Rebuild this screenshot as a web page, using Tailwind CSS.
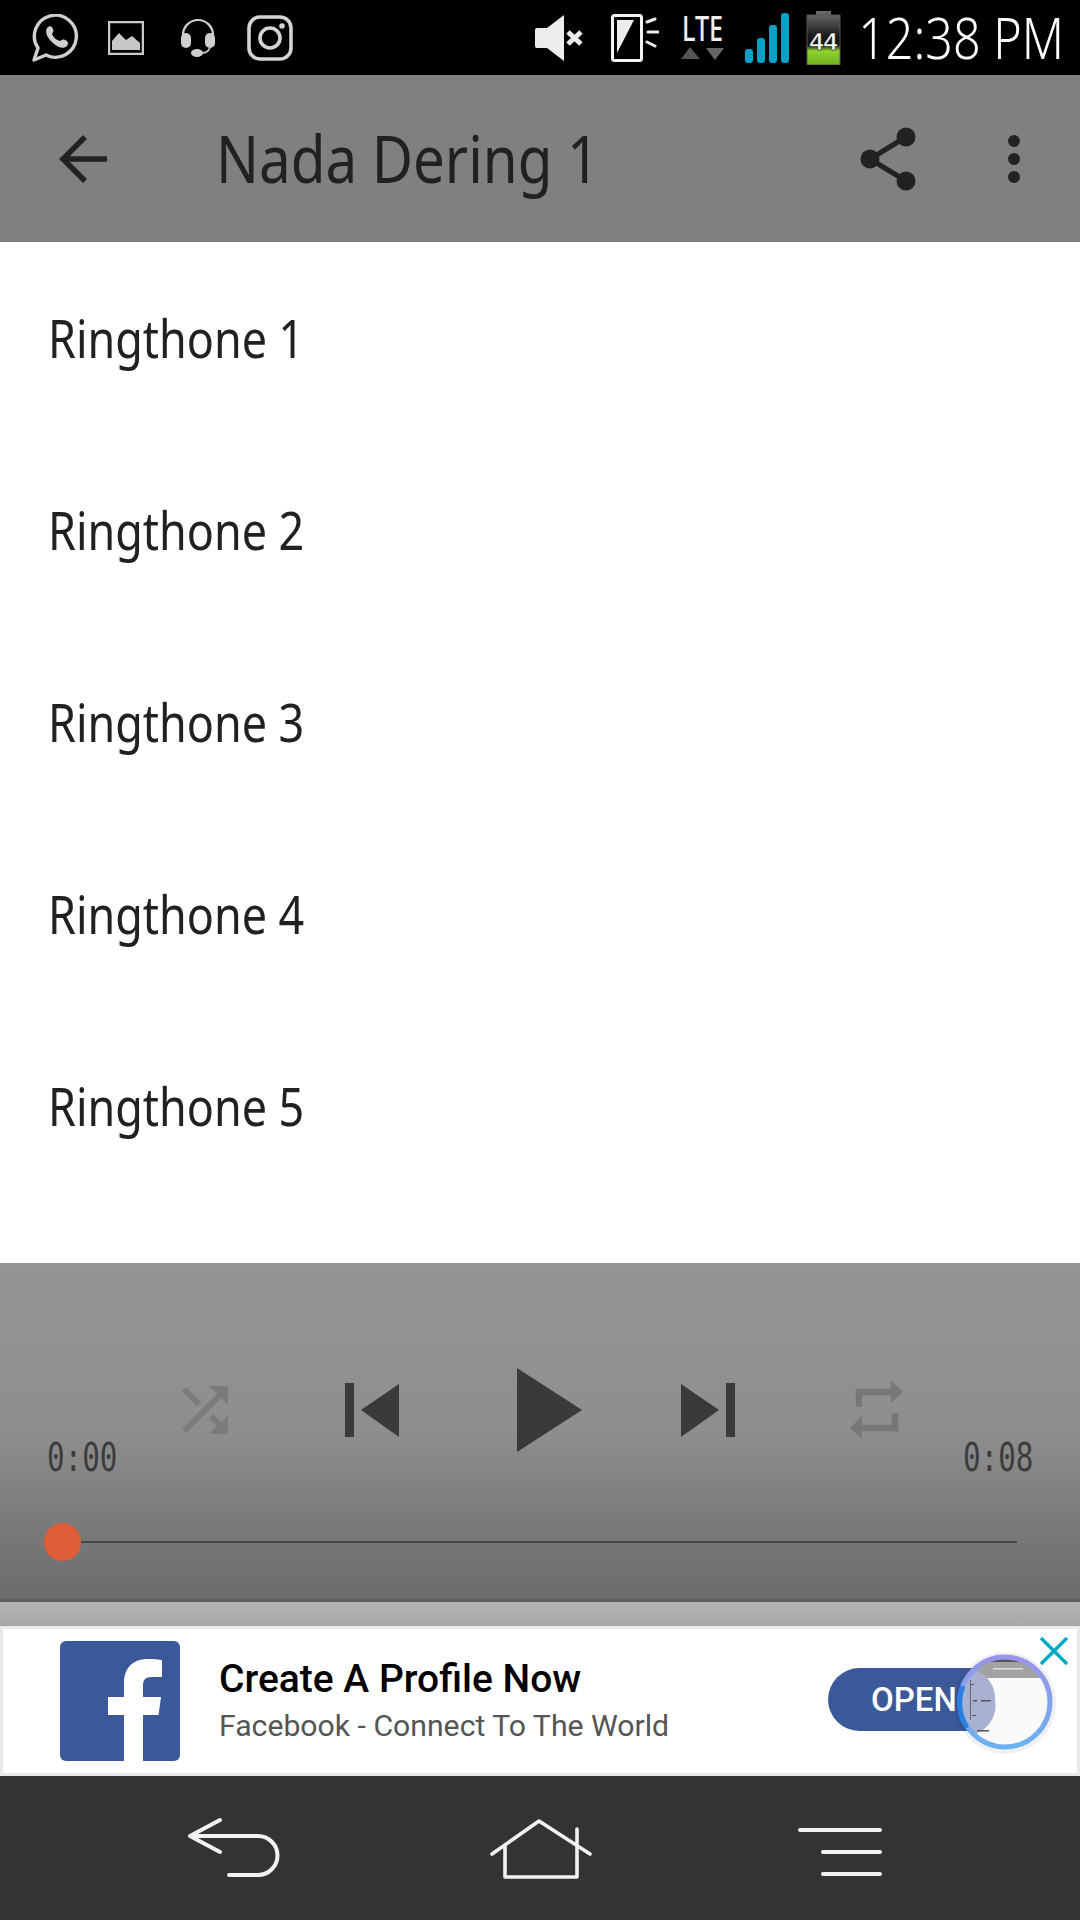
<!DOCTYPE html>
<html>
<head>
<meta charset="utf-8">
<script src="https://cdn.jsdelivr.net/npm/@tailwindcss/browser@4"></script>
</head>
<body class="m-0">
<div class="w-[1080px] h-[1920px] flex flex-col overflow-hidden bg-white font-['Noto_Sans',sans-serif]">

  <!-- status bar -->
  <div class="h-[75px] shrink-0 bg-black flex items-center relative">
    <svg class="shrink-0 ml-[31px] w-[48px] h-[48px]" viewBox="0 0 48 48" fill="none" stroke="#cfcfcf">
      <path d="M3 46 L7 34 A21 21 0 1 1 15 41 Z" stroke-width="3.4" stroke-linejoin="round"/>
      <path d="M16 14 c3 -3 5 -2 6 1 c1 2 0 3 -1 5 c2 4 4 6 8 7 c2 -1 3 -2 5 -1 c3 1 4 3 2 6 c-3 3 -8 2 -13 -2 c-5 -4 -10 -11 -7 -16 Z" fill="#cfcfcf" stroke="none"/>
    </svg>
    <svg class="shrink-0 ml-[29px] w-[36px] h-[34px]" viewBox="0 0 36 34">
      <rect x="1" y="1" width="34" height="32" fill="none" stroke="#c8c8c8" stroke-width="2.5"/>
      <path d="M4 29 V20 L11 12 L18 19 L24 15 L32 22 V29 Z" fill="#c8c8c8"/>
    </svg>
    <svg class="shrink-0 ml-[36px] w-[36px] h-[39px]" viewBox="0 0 36 39" fill="none">
      <path d="M3 20 V17 A15 15 0 0 1 33 17 V20" stroke="#cfcfcf" stroke-width="2.2"/>
      <rect x="1" y="15" width="10" height="15" rx="5" fill="#cfcfcf"/>
      <rect x="25" y="15" width="10" height="15" rx="5" fill="#cfcfcf"/>
      <path d="M30 29 C29 33 26 35 22 35" stroke="#cfcfcf" stroke-width="1.6"/>
      <ellipse cx="17" cy="35" rx="6" ry="4" fill="#cfcfcf"/>
    </svg>
    <svg class="shrink-0 ml-[31px] w-[46px] h-[46px]" viewBox="0 0 46 46" fill="none" stroke="#d4d4d4">
      <rect x="2" y="2" width="42" height="42" rx="11" stroke-width="3.6"/>
      <circle cx="23" cy="23" r="10" stroke-width="3.6"/>
      <circle cx="35" cy="11" r="2.8" fill="#d4d4d4" stroke="none"/>
    </svg>

    <svg class="shrink-0 ml-[241px] w-[50px] h-[46px]" viewBox="0 0 50 46">
      <path d="M1 15 Q1 13 3 13 H13 L30 0 V46 L13 33 H3 Q1 33 1 31 Z" fill="#ececec"/>
      <path d="M34 17 L47 29 M47 17 L34 29" stroke="#ececec" stroke-width="5"/>
    </svg>
    <svg class="shrink-0 ml-[27px] w-[48px] h-[48px]" viewBox="0 0 48 48" fill="none">
      <rect x="1.5" y="1.5" width="29" height="45" rx="2" stroke="#f2f2f2" stroke-width="3"/>
      <path d="M6 6 H23 L6 39 Z" fill="#ececec"/>
      <path d="M36 8 L44 5 M37 18 H47 M36 28 L44 32" stroke="#ececec" stroke-width="3" stroke-linecap="round"/>
    </svg>
    <div class="shrink-0 ml-[22px] w-[44px] h-[48px] flex flex-col items-center">
      <span class="block font-medium text-[35px] leading-[28px] h-[32px] text-[#f0f0f0] scale-x-[.72]">LTE</span>
      <svg class="w-[44px] h-[15px]" viewBox="0 0 44 15">
        <path d="M0 13 L9 1 L19 13 Z" fill="#555"/>
        <path d="M25 2 H43 L34 14 Z" fill="#666"/>
      </svg>
    </div>
    <svg class="shrink-0 ml-[20px] w-[44px] h-[50px]" viewBox="0 0 44 50" fill="#0aa0c6">
      <rect x="0" y="36" width="8" height="14" rx="3"/>
      <rect x="12" y="25" width="8" height="25" rx="3"/>
      <rect x="24" y="12" width="8" height="38" rx="3"/>
      <rect x="36" y="0" width="8" height="50" rx="3"/>
    </svg>
    <svg class="shrink-0 ml-[17px] w-[35px] h-[54px]" viewBox="0 0 35 54">
      <defs>
        <linearGradient id="bt" x1="0" x2="0" y1="0" y2="1">
          <stop offset="0" stop-color="#666"/><stop offset=".4" stop-color="#1c1c1c"/><stop offset=".6" stop-color="#111"/><stop offset=".72" stop-color="#8fd32e"/><stop offset="1" stop-color="#6fae1e"/>
        </linearGradient>
      </defs>
      <rect x="10" y="0" width="15" height="5" fill="#666"/>
      <rect x="1" y="4" width="33" height="50" fill="url(#bt)" stroke="#555" stroke-width="1"/>
      <text x="17.5" y="39" text-anchor="middle" font-family="Liberation Sans, sans-serif" font-weight="700" font-size="23" fill="#fff" stroke="#000" stroke-width=".5" textLength="28" lengthAdjust="spacingAndGlyphs">44</text>
    </svg>
    <span class="shrink-0 block w-[250px] ml-[-27px] -mt-[2px] text-right text-[57px] leading-[64px] font-light text-white whitespace-nowrap origin-right scale-x-[.85]">12:38 PM</span>
  </div>

  <!-- app bar -->
  <div class="h-[167px] shrink-0 bg-[#808080] flex items-center relative">
    <svg class="shrink-0 ml-[59px] w-[50px] h-[50px]" viewBox="0 0 50 50" fill="none" stroke="#222" stroke-width="5.5">
      <path d="M48 25 H5 M26 3 L4 25 L26 47"/>
    </svg>
    <h1 class="ml-[107px] -mt-[4px] font-normal text-[66px] leading-none text-[#212121] whitespace-nowrap origin-left scale-x-[.856]">Nada Dering 1</h1>
    <svg class="absolute left-[858px] top-[52px] w-[60px] h-[64px]" viewBox="0 0 60 64">
      <path d="M48 10 L12 32 L48 54" fill="none" stroke="#222" stroke-width="5"/>
      <circle cx="48" cy="10" r="9.5" fill="#222"/><circle cx="12" cy="32" r="9.5" fill="#222"/><circle cx="48" cy="54" r="9.5" fill="#222"/>
    </svg>
    <div class="absolute left-[1008px] top-[60px] flex flex-col gap-[6px]">
      <div class="w-[12px] h-[12px] rounded-full bg-[#222]"></div>
      <div class="w-[12px] h-[12px] rounded-full bg-[#222]"></div>
      <div class="w-[12px] h-[12px] rounded-full bg-[#222]"></div>
    </div>
  </div>

  <!-- list -->
  <ul class="h-[1021px] shrink-0 bg-white flex flex-col">
    <li class="h-[192px] flex items-center pl-[48px] text-[52px] text-[#212121] whitespace-nowrap"><span class="origin-left scale-x-[.863]">Ringthone 1</span></li>
    <li class="h-[192px] flex items-center pl-[48px] text-[52px] text-[#212121] whitespace-nowrap"><span class="origin-left scale-x-[.863]">Ringthone 2</span></li>
    <li class="h-[192px] flex items-center pl-[48px] text-[52px] text-[#212121] whitespace-nowrap"><span class="origin-left scale-x-[.863]">Ringthone 3</span></li>
    <li class="h-[192px] flex items-center pl-[48px] text-[52px] text-[#212121] whitespace-nowrap"><span class="origin-left scale-x-[.863]">Ringthone 4</span></li>
    <li class="h-[192px] flex items-center pl-[48px] text-[52px] text-[#212121] whitespace-nowrap"><span class="origin-left scale-x-[.863]">Ringthone 5</span></li>
  </ul>

  <!-- player -->
  <div class="h-[339px] shrink-0 bg-gradient-to-b from-[#959595] via-[#8e8e8e] to-[#6b6b6b] border-b-[3px] border-[#5e5e5e] relative">
    <div class="flex items-start pt-[105px]">
      <span class="block shrink-0 ml-[47px] mt-[70px] w-[70px] font-['DejaVu_Sans_Mono',monospace] text-[39px] leading-[40px] text-[#3c3c3c] origin-left scale-x-[.75] whitespace-nowrap">0:00</span>
      <svg class="shrink-0 ml-[64px] mt-[17px] w-[48px] h-[50px]" viewBox="0 0 48 50" fill="#7b7b7b">
        <path d="M3 46 L40 9 M3 4 L18 19 M30 31 L40 41" stroke="#7b7b7b" stroke-width="6" fill="none"/>
        <path d="M28 1 H47 V20 L38 11 Z"/>
        <path d="M47 30 V49 H28 L38 39 Z"/>
      </svg>
      <svg class="shrink-0 ml-[116px] mt-[15px] w-[55px] h-[54px]" viewBox="0 0 55 54" fill="#3a3a3a">
        <rect x="0" y="0" width="9" height="54"/>
        <path d="M16 27 L54 1 V54 Z"/>
      </svg>
      <svg class="shrink-0 ml-[116px] w-[66px] h-[84px]" viewBox="0 0 66 84" fill="#3a3a3a">
        <path d="M1 0 L66 42 L1 84 Z"/>
      </svg>
      <svg class="shrink-0 ml-[98px] mt-[15px] w-[56px] h-[54px]" viewBox="0 0 56 54" fill="#3a3a3a">
        <path d="M1 1 L39 27 L1 54 Z"/>
        <rect x="46" y="0" width="9" height="54"/>
      </svg>
      <svg class="shrink-0 ml-[114px] mt-[12px] w-[54px] h-[60px]" viewBox="0 0 54 60" fill="#777">
        <path d="M9 27 V12 H44 M45 33 V48 H10" fill="none" stroke="#777" stroke-width="6.5"/>
        <path d="M41 0 L53 12 L41 23 Z"/>
        <path d="M12 36 L0 48 L12 59 Z"/>
      </svg>
      <span class="block shrink-0 ml-[59px] mt-[70px] w-[70px] font-['DejaVu_Sans_Mono',monospace] text-[39px] leading-[40px] text-[#3c3c3c] origin-left scale-x-[.75] whitespace-nowrap">0:08</span>
    </div>
    <div class="mt-[45px] ml-[44px] w-[973px] flex items-center h-[38px]">
      <div class="w-[37px] h-[38px] rounded-full bg-[#df5e38] shrink-0"></div>
      <div class="grow h-[2px] bg-[#454545]"></div>
    </div>
  </div>

  <!-- spacer strip -->
  <div class="h-[24px] shrink-0 bg-gradient-to-b from-[#b4b4b4] to-[#a8a8a8]"></div>

  <!-- ad -->
  <div class="h-[150px] shrink-0 border-[3px] border-[#e9e9e9] bg-white flex items-center relative">
    <svg class="shrink-0 ml-[57px] w-[120px] h-[120px] rounded-[6px]" viewBox="0 0 120 120">
      <rect width="120" height="120" fill="#3b5998"/>
      <path d="M64 120 V74 H48 V56 H64 V42 C64 26 74 18 88 18 C94 18 99 18.5 102 19 V36 H92 C85 36 83 39 83 45 V56 H101 L98.5 74 H83 V120 Z" fill="#fff"/>
    </svg>
    <div class="ml-[39px] flex flex-col font-['Roboto',sans-serif]">
      <span class="text-[39px] leading-[44px] -mt-[2px] font-medium text-black whitespace-nowrap">Create A Profile Now</span>
      <span class="text-[30.2px] leading-[36px] mt-[7px] text-[#555] whitespace-nowrap">Facebook - Connect To The World</span>
    </div>
    <div class="absolute left-[825px] top-[39px] w-[180px] h-[63px] rounded-full bg-[#3b5998] flex items-center pl-[43px]">
      <span class="font-['Roboto',sans-serif] font-medium text-[33px] text-white leading-none">OPEN</span>
    </div>
    <svg class="absolute left-[1037px] top-[8px] w-[28px] h-[28px]" viewBox="0 0 28 28" stroke="#00a9c5" stroke-width="3.4">
      <path d="M1 1 L27 27 M27 1 L1 27"/>
    </svg>
    <!-- floating magnifier bubble -->
    <svg class="absolute left-[950px] top-[21px] w-[104px] h-[104px]" viewBox="0 0 104 104">
      <defs>
        <linearGradient id="ring" x1="0" x2="0" y1="0" y2="1">
          <stop offset="0" stop-color="#9a94ea"/><stop offset="1" stop-color="#6ab2f2"/>
        </linearGradient>
        <clipPath id="lens"><circle cx="52" cy="52" r="44"/></clipPath>
      </defs>
      <circle cx="52" cy="53" r="51" fill="#000" opacity=".06"/>
      <circle cx="52" cy="52" r="45" fill="#fafafa"/>
      <g clip-path="url(#lens)">
        <rect x="0" y="0" width="104" height="28" fill="#a2a2a2"/>
        <rect x="28" y="0" width="50" height="12" fill="#555"/>
        <path d="M0 28 H22 L12 20 H0 Z" fill="#66709a"/>
        <path d="M0 20 H22 A30 30 0 0 1 42 50 A30 30 0 0 1 22 84 H0 Z" fill="#a8b2d0"/>
        <rect x="17" y="30" width="1" height="40" fill="#667"/>
        <rect x="20" y="50" width="4" height="1.5" fill="#555"/>
        <rect x="28" y="50" width="10" height="1.5" fill="#555"/>
        <rect x="18" y="34" width="3" height="1" fill="#555"/>
        <rect x="19" y="65" width="4" height="1" fill="#555"/>
        <rect x="24" y="80" width="12" height="1.5" fill="#555"/>
        <rect x="40" y="18" width="30" height="1.5" fill="#ddd"/>
      </g>
      <circle cx="52" cy="52" r="45" fill="none" stroke="url(#ring)" stroke-width="5"/>
      <path d="M14 78 A45 45 0 0 1 10 36" fill="none" stroke="#2a7fe0" stroke-width="5"/>
    </svg>
  </div>

  <!-- nav -->
  <div class="grow bg-[#333333] relative flex items-start">
    <svg class="shrink-0 ml-[186px] mt-[41px] w-[100px] h-[64px]" viewBox="0 0 100 64" fill="none" stroke="#f2f2f2" stroke-width="4" stroke-linecap="round" stroke-linejoin="round">
      <path d="M34 3 L4 19 L34 35 M4 19 H72 A19.5 19.5 0 0 1 72 58 H43"/>
    </svg>
    <svg class="shrink-0 ml-[203px] mt-[42px] w-[104px] h-[64px]" viewBox="0 0 104 64" fill="none" stroke="#f2f2f2" stroke-width="3.6" stroke-linecap="round" stroke-linejoin="round">
      <path d="M3 36 L50 3 L101 36 M16 28 V59 H88 V11"/>
    </svg>
    <div class="shrink-0 ml-[205px] mt-[52px] w-[84px] flex flex-col items-end gap-[18px]">
      <div class="w-[84px] h-[4px] rounded-full bg-[#f2f2f2]"></div>
      <div class="w-[61px] h-[4px] rounded-full bg-[#f2f2f2]"></div>
      <div class="w-[61px] h-[4px] rounded-full bg-[#f2f2f2]"></div>
    </div>
  </div>
</div>
</body>
</html>
